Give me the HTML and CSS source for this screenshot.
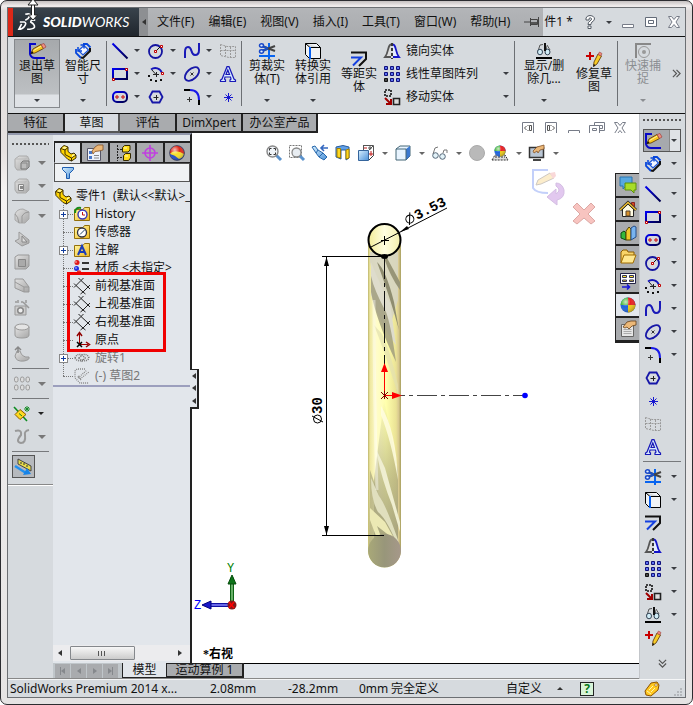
FILE: index.html
```html
<!DOCTYPE html>
<html lang="zh-CN">
<head>
<meta charset="utf-8">
<meta name="viewport" content="width=device-width, initial-scale=1">
<title>SolidWorks Premium 2014</title>
<link rel="stylesheet" href="styles.css">
</head>
<body>
<svg class="sprite" aria-hidden="true">
  <defs>
    <linearGradient id="g-blue" x1="0" y1="0" x2="1" y2="1"><stop offset="0" stop-color="#0000f0"/><stop offset="1" stop-color="#00004a"/></linearGradient>
    <linearGradient id="g-grey" x1="0" y1="0" x2="1" y2="1"><stop offset="0" stop-color="#e2e2e2"/><stop offset="1" stop-color="#a6a6a6"/></linearGradient>
    <linearGradient id="g-cyan" x1="0" y1="0" x2="1" y2="1"><stop offset="0" stop-color="#d8f0ff"/><stop offset="1" stop-color="#4a90d8"/></linearGradient>
    <linearGradient id="g-gold" x1="0" y1="0" x2="1" y2="1"><stop offset="0" stop-color="#fff9a8"/><stop offset="1" stop-color="#f0b820"/></linearGradient>
    <radialGradient id="g-shine" cx=".35" cy=".3" r=".8"><stop offset="0" stop-color="#fff" stop-opacity=".7"/><stop offset=".4" stop-color="#fff" stop-opacity="0"/><stop offset="1" stop-color="#000" stop-opacity=".35"/></radialGradient>
  </defs>
  <symbol id="sketch" viewBox="0 0 16 16"><path d="M7 1H1V11Q2 15 6 15H16" fill="none" stroke="#0808c8" stroke-width="2"/><path d="M2 10.500L4 6L12 1.500L14.500 5.500L6 10Z" fill="#f8c820" stroke="#553000" stroke-width=".8"/><path d="M4.500 7.500L12.500 3" stroke="#fff2a0"/><path d="M12 1.500L15 .500L17 4L14.500 5.500Z" fill="#f09080" stroke="#944" stroke-width=".7"/><path d="M1.500 11L3 8l1.500 2z" fill="#111"/></symbol>
  <symbol id="dim" viewBox="0 0 16 16"><path d="M8 1H12L15.500 4.500M1 6V10L6 15" fill="none" stroke="#0646dc" stroke-width="1.800"/><path d="M3.500 7.500L9 2.500L13.500 7L8 12Z" fill="#f4f7ff" stroke="#1c55d8" stroke-width="1.200"/><path d="M3 4V8H7M5.500 2H9V5.500" fill="none" stroke="#0646dc" stroke-width="1.500"/><path d="M6 14.500L8 15L15 8V5" fill="none" stroke="#111" stroke-width="2"/></symbol>
  <symbol id="line" viewBox="0 0 16 16"><path d="M.500 .500L15.500 15.500" stroke="url(#g-blue)" stroke-width="2"/></symbol>
  <symbol id="rect" viewBox="0 0 16 16"><rect x="1" y="3" width="14" height="10" fill="none" stroke="url(#g-blue)" stroke-width="2"/><path d="M13.500 2.500h2v2h-2zM.500 12.500h2v2h-2z" fill="#fff" stroke="#c00000"/></symbol>
  <symbol id="slot" viewBox="0 0 16 16"><rect x="1" y="3" width="14" height="10" rx="4" fill="none" stroke="url(#g-blue)" stroke-width="2"/><path d="M4 7h2v2H4zM10 7h2v2h-2z" fill="#fff" stroke="#c00000"/></symbol>
  <symbol id="circle" viewBox="0 0 16 16"><circle cx="7.500" cy="8.500" r="6.500" fill="none" stroke="#1414a0" stroke-width="1.800"/><path d="M8 8L13 3" stroke="#111"/><path d="M6.500 7.500h2v2h-2zM12.500 2.500h2v2h-2z" fill="#fff" stroke="#c00000"/></symbol>
  <symbol id="arc" viewBox="0 0 16 16"><path d="M3 3.500A7 7 0 0 1 14 7" fill="none" stroke="#1414b8" stroke-width="1.800"/><path d="M4 4L8 8.500M5 8.500h6M8.500 6v5" stroke="#222"/><path d="M13.500 6.500h2v2h-2z" fill="#fff" stroke="#c00000"/><path d="M0 9h2v2H0zM2 13h2v2H2zM7 14h2v2H7zM12 13h2v2h-2z" fill="#111"/></symbol>
  <symbol id="spline" viewBox="0 0 16 16"><path d="M1 15V9Q1 4 4 4Q6.500 4 7.500 8Q8.500 12 11 12Q15 12 15 7V0" fill="none" stroke="#1a1ab8" stroke-width="2"/></symbol>
  <symbol id="ellipse" viewBox="0 0 16 16"><ellipse cx="8" cy="8" rx="8.500" ry="5" transform="rotate(-42 8 8)" fill="none" stroke="#1818a8" stroke-width="1.800"/><path d="M6.500 6.500l3 3M9.500 6.500l-3 3" stroke="#333"/></symbol>
  <symbol id="fillet" viewBox="0 0 16 16"><path d="M0 1H6" stroke="#000" stroke-width="2"/><path d="M6 1Q15 1 15 11" fill="none" stroke="#1818e8" stroke-width="2"/><path d="M15 11V16" stroke="#000" stroke-width="2"/><path d="M3 10.500h5M5.500 8v5" stroke="#333"/></symbol>
  <symbol id="hex" viewBox="0 0 16 16"><path d="M4.500 2.500H11.500L14.500 8L11.500 13.500H4.500L1.500 8Z" fill="none" stroke="#1616a8" stroke-width="1.800"/><path d="M5.500 8.500h5M8.500 6v5" stroke="#222"/></symbol>
  <symbol id="star" viewBox="0 0 16 16"><path d="M8.500 4v9M4 8.500h9M5.500 5.500l6 6M11.500 5.500l-6 6" stroke="#1616d0"/></symbol>
  <symbol id="plane" viewBox="0 0 16 16"><path d="M.500 1.500L7 3.500H15.500V14.500H9L.500 12.500ZM.500 7.500H15.500M5.500 3v10M10.500 4v10" fill="none" stroke="#999" stroke-dasharray="2 1"/></symbol>
  <symbol id="lettera" viewBox="0 0 16 16"><path d="M.500 15.500V14L2 13L7 .700H9L14 13L15.500 14V15.500H10V14L11 13L10.500 11H5L4.500 13L5.500 14V15.500ZM6 8.500H9.500L7.800 4Z" fill="#d7eaff" stroke="#1818b8" stroke-width="1.200"/></symbol>
  <symbol id="trim" viewBox="0 0 16 16"><path d="M0 13H16M10 0V16" stroke="#0864f0" stroke-width="2"/><path d="M3 3L16 8M3 8L16 3" stroke="#444" stroke-width="2"/><path d="M3 3L9 5.500M3 8L9 5.500" stroke="#1c50c0" stroke-width="2"/><ellipse cx="2.500" cy="2.500" rx="2" ry="1.700" fill="#e4f0ff" stroke="#1848c8" stroke-width="1.500"/><ellipse cx="2.500" cy="8.500" rx="2" ry="1.700" fill="#e4f0ff" stroke="#1848c8" stroke-width="1.500"/></symbol>
  <symbol id="convert" viewBox="0 0 16 16"><path d="M.500 .500H11.500L15.500 4.500V15.500H4.500L.500 11.500ZM.500 .500L5 4.500H15.500" fill="#f1f3f5" stroke="#000"/><path d="M5 4V16" stroke="#0860f0" stroke-width="2"/></symbol>
  <symbol id="offset" viewBox="0 0 16 16"><path d="M0 1.500H15V8L8 15" fill="none" stroke="#111" stroke-width="2"/><path d="M0 6.500H10L2 14.500" fill="none" stroke="#1440e0" stroke-width="2"/></symbol>
  <symbol id="mirror" viewBox="0 0 16 16"><path d="M7 1.500C3.500 2 5 9 1 14H7" fill="#ddd" stroke="#555" stroke-width="1.800"/><path d="M9 1.500C12.500 2 11 9 15 14H9" fill="#e4ecff" stroke="#1414c8" stroke-width="1.800"/><path d="M8 0V16" stroke="#000" stroke-width="1.500" stroke-dasharray="3 2"/></symbol>
  <symbol id="pattern" viewBox="0 0 16 16"><g fill="#5c72f0" stroke="#10107c"><path d="M.500 .500h3v3h-3zM6.500 .500h3v3h-3zM12.500 .500h3v3h-3zM.500 6.500h3v3h-3zM6.500 6.500h3v3h-3zM12.500 6.500h3v3h-3zM6.500 12.500h3v3h-3zM12.500 12.500h3v3h-3z"/><path d="M.500 12.500h3v3h-3z" fill="#444" stroke="#111"/></g></symbol>
  <symbol id="move" viewBox="0 0 16 16"><path d="M1 1H7V7H1Z" fill="none" stroke="#111" stroke-width="1.600" stroke-dasharray="2 1"/><path d="M9.500 9.500h6v6h-6z" fill="#dcdcdc" stroke="#222" stroke-width="1.600"/><path d="M1 9L6 14M7 10V15H2" stroke="#a00000" stroke-width="2" fill="none"/></symbol>
  <symbol id="glasses" viewBox="0 0 16 16"><path d="M2 8L4 2L7 1.500M11 9L10 3M11 2L14 7" fill="none" stroke="#555"/><ellipse cx="4" cy="9" rx="2.500" ry="2.800" fill="#d0ecf6" stroke="#345"/><ellipse cx="11.500" cy="9" rx="2.500" ry="2.800" fill="#d0ecf6" stroke="#345"/><path d="M9 0v8" stroke="#111" stroke-width="2"/><path d="M0 15H16" stroke="#000" stroke-width="2"/></symbol>
  <symbol id="repair" viewBox="0 0 16 16"><path d="M0 5H8M4 1V9" stroke="#c80000" stroke-width="2"/><path d="M7.500 15.500L8 11L12 3L15.500 5L11 13Z" fill="#f8cc28" stroke="#553000" stroke-width=".8"/><path d="M12 3.500L13.500 1L16 2.500L15 5Z" fill="#ee8878" stroke="#944" stroke-width=".6"/><path d="M7.500 16V13l2 1z" fill="#111"/></symbol>
  <symbol id="snap" viewBox="0 0 16 16"><path d="M1 15V1H16" fill="none" stroke="#888" stroke-width="2"/><circle cx="9" cy="9" r="5.500" fill="none" stroke="#999"/><circle cx="9" cy="9" r="2" fill="#999"/></symbol>
  <symbol id="part" viewBox="0 0 16 16"><path d="M.500 3.500L4 .500L8 2V6.500L11 9L14 8L16 10V13L11.500 16L8 14.500L1 7.500Z" fill="#ffd400" stroke="#3c2c00"/><path d="M1 3.500L5 5L8 2.500M5 5V9.500L11.500 13L16 10M11.500 13V16" fill="none" stroke="#3c2c00"/><path d="M2 3.300L4.500 1.500L7 2.300L5 4ZM12 10L14 9L15 10L12 12Z" fill="#fff6a0"/></symbol>
  <symbol id="props" viewBox="0 0 16 16"><path d="M.500 3.500H13.500V15.500H.500Z" fill="#eef2fa" stroke="#556"/><path d="M2 6h3v3H2zM2 11h3v3H2z" fill="#4a78c8"/><path d="M7 10.500h5M7 13h5" stroke="#888"/><path d="M5 6L8 2L11 0H16V5L12 6L8 6.500L6 9Z" fill="#ecb878" stroke="#84542a" stroke-width=".8"/></symbol>
  <symbol id="sheet" viewBox="0 0 16 16"><path d="M1.500 3.500H13.500V15.500H1.500Z" fill="#e6e6e6" stroke="#666"/><path d="M3.500 8.500h8M3.500 10.500h8M3.500 12.500h8" stroke="#aaa"/><path d="M3 6L7 1L11 0H16V4L12 5L9 8L7 6L5 7Z" fill="#ecb878" stroke="#64401c" stroke-width=".8"/></symbol>
  <symbol id="config" viewBox="0 0 16 16"><path d="M2.500 0V16M2 4.500H7M2 12.500H7" stroke="#222" stroke-dasharray="2 1"/><path d="M7.500 2.500l2-2h5.500v4.500l-2 2H7.500zM8.500 10.500l2-2h5v4.500l-2 2.500h-5z" fill="#ffdc18" stroke="#332800"/><path d="M9 3h3M10 11h3" stroke="#fffbc0"/></symbol>
  <symbol id="target" viewBox="0 0 16 16"><circle cx="8" cy="8" r="5" fill="none" stroke="#c040e0" stroke-width="1.600"/><path d="M8 0V16M0 8H16" stroke="#c040e0" stroke-width="1.600"/></symbol>
  <symbol id="ball" viewBox="0 0 16 16"><circle cx="8" cy="8" r="7.500" fill="#1c62dc"/><path d="M8 8V.500A7.500 7.500 0 0 0 .500 8Z" fill="#4cb83c"/><path d="M8 8V.500A7.500 7.500 0 0 1 15.500 8Z" fill="#e82020"/><path d="M8 8H15.500A7.500 7.500 0 0 1 8 15.500Z" fill="#ecc814"/><circle cx="8" cy="8" r="7.500" fill="url(#g-shine)"/></symbol>
  <symbol id="ball2" viewBox="0 0 16 16"><circle cx="8" cy="8" r="7.500" fill="#2048c8"/><path d="M4 2Q8 -1 13 3Q16 7 15 9L8 7Q4 6 1 9Q0 5 4 2Z" fill="#e02818"/><path d="M3 7Q9 5 15 9Q14 13 10 14Q6 10 1 9Z" fill="#f8dc28"/><circle cx="8" cy="8" r="7.500" fill="url(#g-shine)" stroke="#333" stroke-width=".5"/></symbol>
  <symbol id="folder" viewBox="0 0 16 16"><path d="M.500 3.500H9L10.500 1.500H15.500V14.500H.500Z" fill="url(#g-gold)" stroke="#94700c"/></symbol>
  <symbol id="history" viewBox="0 0 16 16"><use href="#folder"/><circle cx="8.500" cy="8.500" r="4.500" fill="#fff" stroke="#3838b8" stroke-width="1.400"/><path d="M8.500 6V9H11" fill="none" stroke="#c01010"/><path d="M1 7Q1 1 7 2" fill="none" stroke="#188c18" stroke-width="2"/></symbol>
  <symbol id="sensor" viewBox="0 0 16 16"><use href="#folder"/><circle cx="8" cy="8.500" r="4.500" fill="#fff" stroke="#334" stroke-width="1.300"/><path d="M6 10.500L10.500 6" stroke="#246"/></symbol>
  <symbol id="note" viewBox="0 0 16 16"><use href="#folder"/><path d="M4 13L8 4L12 13M5.500 10H10.500" fill="none" stroke="#1c3cb8" stroke-width="2"/></symbol>
  <symbol id="material" viewBox="0 0 16 16"><circle cx="3" cy="2.500" r="2.500" fill="#e01818"/><circle cx="2.500" cy="8.500" r="2.500" fill="#2030e0"/><circle cx="5" cy="12.500" r="2.300" fill="#e03030"/><circle cx="2" cy="2" r=".7" fill="#fff"/><circle cx="2" cy="8" r=".7" fill="#fff"/><path d="M8 3H15M8 9H15" stroke="#333" stroke-width="2"/></symbol>
  <symbol id="datum" viewBox="0 0 16 16"><path d="M2 7.500L7 2.500L14 9L9 14ZM4.500 0L7 2.500L9.500 0M14 9L16 7M14 9L16 11M2 7.500L0 5.500M2 7.500L0 9.500M9 14L6.500 16M9 14L11.500 16" fill="none" stroke="#222"/></symbol>
  <symbol id="origin" viewBox="0 0 16 16"><path d="M5.500 12V2M6 12.500H14" stroke="#a00000"/><path d="M3 4l2.500-3.500L8 4M12 10l3.500 2.500L12 15" fill="none" stroke="#900000" stroke-width="1.500"/><path d="M3 10l5 5M8 10l-5 5" stroke="#000" stroke-width="1.500"/></symbol>
  <symbol id="revolve" viewBox="0 0 16 16"><path d="M1 8Q3 3 8 5Q13 3 15 8Q13 12 8 10Q3 12 1 8ZM5 8L8 5L11 8L8 11Z" fill="none" stroke="#777" stroke-width="1.600" stroke-dasharray="1 1"/></symbol>
  <symbol id="sketchoff" viewBox="0 0 16 16"><path d="M11 1H3L1 3V10L6 15H15M4 10L13 2M6 11L15 4M4 8L7 12" fill="none" stroke="#888" stroke-width="1.300" stroke-dasharray="1 1"/></symbol>
  <symbol id="cube" viewBox="0 0 16 16"><path d="M1 4L5 1H13L15 4V12L12 15H3L1 12Z" fill="url(#g-grey)" stroke="#aaa"/><path d="M1 4H11L15 2M11 4V15" fill="none" stroke="#bbb"/></symbol>
  <symbol id="boss" viewBox="0 0 16 16"><use href="#cube"/><path d="M7 8L9 6H15V12L13 14H7Z" fill="#bbb" stroke="#777"/><path d="M7 8H13V14" fill="none" stroke="#888"/></symbol>
  <symbol id="cut" viewBox="0 0 16 16"><use href="#cube"/><path d="M4.500 6.500H9.500V12.500H4.500Z" fill="#eee" stroke="#888"/><path d="M6 8h3v3H6z" fill="#888"/></symbol>
  <symbol id="round" viewBox="0 0 16 16"><path d="M1 12V6Q3 1 9 1L15 4V11L11 15L5 15Z" fill="url(#g-grey)" stroke="#aaa"/><path d="M1 6Q4 8 5 15M8 8Q10 4 15 4M8 8V15" fill="none" stroke="#999"/></symbol>
  <symbol id="rib" viewBox="0 0 16 16"><path d="M5 1V8L1 10L8 15L15 12V9Z" fill="url(#g-grey)" stroke="#999"/><path d="M8 5V11H13Z" fill="#ddd" stroke="#888"/></symbol>
  <symbol id="shell" viewBox="0 0 16 16"><path d="M1 3L4 1H15V12L12 15H1Z" fill="url(#g-grey)" stroke="#999"/><path d="M4.500 5.500H11.500V12.500H4.500Z" fill="#aaa" stroke="#888"/></symbol>
  <symbol id="draft" viewBox="0 0 16 16"><path d="M1 2H9L15 10V15H10L1 11Z" fill="url(#g-grey)" stroke="#999"/><path d="M1 5L10 10H15M10 10V15" fill="none" stroke="#999"/></symbol>
  <symbol id="wiz" viewBox="0 0 16 16"><path d="M1 6H12V15H1Z" fill="#ccc" stroke="#999"/><circle cx="6.500" cy="10.500" r="2.800" fill="#eee" stroke="#888" stroke-width="1.500"/><path d="M9 2L15 8M1 2h2M4 0v3M7 2h2M12 0v3" stroke="#999" stroke-width="1.500"/></symbol>
  <symbol id="cyl" viewBox="0 0 16 16"><path d="M1 4V12Q1 15 8 15Q15 15 15 12V4Z" fill="url(#g-grey)" stroke="#999"/><ellipse cx="8" cy="4" rx="7" ry="3" fill="#e4e4e4" stroke="#999"/></symbol>
  <symbol id="dome" viewBox="0 0 16 16"><path d="M1 10Q2 16 10 15Q16 14 15 11Q8 12 6 5H3Z" fill="url(#g-grey)" stroke="#999"/><path d="M1 4L4 1L7 4M4 1V7" fill="none" stroke="#888" stroke-width="1.500"/></symbol>
  <symbol id="lpat" viewBox="0 0 16 16"><g fill="#ddd" stroke="#999"><rect x=".5" y="1" width="3.500" height="5" rx="1.700"/><rect x="6.500" y="1" width="3.500" height="5" rx="1.700"/><rect x="12" y="1" width="3.500" height="5" rx="1.700"/><rect x=".5" y="9" width="3.500" height="5" rx="1.700"/><rect x="6.500" y="9" width="3.500" height="5" rx="1.700"/><rect x="12" y="9" width="3.500" height="5" rx="1.700"/></g></symbol>
  <symbol id="refgeo" viewBox="0 0 16 16"><path d="M0 1L13 15" stroke="#0c8c20" stroke-width="1.600"/><path d="M1 8.500L6 3.500L12 8.500L6 13.500Z" fill="#ffd820" stroke="#8a5c00"/><path d="M5 7.500L8 10" stroke="#0c8c20"/><path d="M13 0V6M10 3H16M11 1L15 5M15 1L11 5" stroke="#188c28"/></symbol>
  <symbol id="curve" viewBox="0 0 16 16"><path d="M1 2Q8 0 7 6Q1 13 7 14Q12 14 11 6Q10 2 15 1" fill="none" stroke="#999" stroke-width="2"/></symbol>
  <symbol id="instant" viewBox="0 0 16 16"><path d="M3 0V5L16 12V7Z" fill="#e8dc48" stroke="#444"/><path d="M6 3v2M9 4v2M12 6v2" stroke="#333"/><path d="M0 7L11 14" stroke="#2090f0" stroke-width="2.500"/><path d="M8 16L16 15L12 9Z" fill="#1884e8"/></symbol>
  <symbol id="zoomfit" viewBox="0 0 16 16"><path d="M10 10L15 15" stroke="#5b92cc" stroke-width="3"/><circle cx="6.500" cy="6.500" r="5.500" fill="#f0f4f8" stroke="#888" stroke-width="1.400"/><path d="M3.500 5.500v-2h2M7.500 3.500h2v2M9.500 7.500v2h-2M5.500 9.500h-2v-2" fill="none" stroke="#333"/></symbol>
  <symbol id="zoomarea" viewBox="0 0 16 16"><path d="M.500 .500H12.500V12.500H.500Z" fill="none" stroke="#777" stroke-dasharray="2 1"/><path d="M10 10L15 15" stroke="#5b92cc" stroke-width="3"/><circle cx="7.500" cy="7.500" r="4.500" fill="#e8edf2" stroke="#888" stroke-width="1.300"/></symbol>
  <symbol id="prev" viewBox="0 0 16 16"><path d="M0 2L3 1L6 5L11 8L15 12L12 15L7 12L4 8Z" fill="url(#g-cyan)" stroke="#2868ac"/><path d="M6 5L4 8M11 8L7 12" stroke="#2868ac"/><path d="M9 3H16M12 0L9 3L12 6" fill="none" stroke="#3468c0" stroke-width="1.600"/></symbol>
  <symbol id="section" viewBox="0 0 16 16"><path d="M1 2L8 .500L14 2V13L11 15V5H6V14L1 12Z" fill="#60a0e8" stroke="#285c9c"/><path d="M2 3.500H5.500V13L2 12ZM11 5L14 4V13L11 14Z" fill="#ffd820" stroke="#a48000"/></symbol>
  <symbol id="orient" viewBox="0 0 16 16"><path d="M5 .500H15.500V11M5.500 1V5M15 1L11 5M10 3h4M12 1v4" fill="none" stroke="#555"/><path d="M.500 5.500H10.500V15.500H.500Z" fill="url(#g-cyan)" stroke="#35659c"/><path d="M11 9h4M13 6v5M6 3h3" stroke="#c01818"/><path d="M11 15L15 11" stroke="#333"/></symbol>
  <symbol id="display" viewBox="0 0 16 16"><path d="M1 4L5 1H15V11L11 15H1Z" fill="#e8f4ff" stroke="#467"/><path d="M11 4L15 1V11L11 15Z" fill="#3a78d0"/><path d="M1 4H11V15" fill="none" stroke="#467"/></symbol>
  <symbol id="specs" viewBox="0 0 16 16"><path d="M1 9L3 3L6 2M11 8L12 5L15 5V8" fill="none" stroke="#777"/><circle cx="3.500" cy="10.500" r="2.800" fill="#e2f2f8" stroke="#567"/><circle cx="10.500" cy="11.500" r="2.800" fill="#e2f2f8" stroke="#567"/></symbol>
  <symbol id="greyball" viewBox="0 0 16 16"><circle cx="8" cy="8" r="7.500" fill="#b9b9b9" stroke="#aaa"/></symbol>
  <symbol id="scene" viewBox="0 0 16 16"><path d="M0 15L3 10H13L16 15ZM3 12H13" fill="#ddd" stroke="#333" stroke-dasharray="2 1"/><svg x="2" y="0" width="12" height="12"><use href="#ball" width="12" height="12"/></svg></symbol>
  <symbol id="viewset" viewBox="0 0 16 16"><path d="M.500 2.500H14.500V12.500H.500Z" fill="#bac6d4" stroke="#333" stroke-width="1.500"/><path d="M4 15H12" stroke="#444" stroke-width="2"/><path d="M4 6L8 2L15 0V4L11 5L9 8L8 6L5 8Z" fill="#ecb878" stroke="#84542a" stroke-width=".8"/></symbol>
  <symbol id="forum" viewBox="0 0 16 16"><path d="M0 0H12V9H6L3 12V9H0Z" fill="#58a8e0" stroke="#2874b0"/><path d="M5 6H16V13H14V16L11 13H5Z" fill="#a8dc28" stroke="#5c9008"/></symbol>
  <symbol id="home" viewBox="0 0 16 16"><path d="M11.500 1.500h3v4h-3z" fill="#d84820" stroke="#822"/><path d="M2.500 8V15.500H13.500V8L8 3Z" fill="#fffbe2" stroke="#222"/><path d="M0 9L8 1.500L16 9" fill="none" stroke="#222" stroke-width="3"/><path d="M0 9L8 1.500L16 9" fill="none" stroke="#f0c030" stroke-width="1.500"/><path d="M6 10h4v5H6z" fill="#d89028" stroke="#543"/></symbol>
  <symbol id="lib" viewBox="0 0 16 16"><path d="M1 8l3-2 2 2v7l-5-2z" fill="#34b83c" stroke="#084c10"/><path d="M6 6l3-4 2 2v11H6z" fill="#f0c828" stroke="#554400"/><path d="M11 3l3-2 2 1v10l-5 3z" fill="#78b4f0" stroke="#244c88"/></symbol>
  <symbol id="open" viewBox="0 0 16 16"><path d="M1 14V3L3 1H7L8 3H14V6" fill="#f8d468" stroke="#8c5c00"/><path d="M1 14L4 6H16L13 14Z" fill="#ffe890" stroke="#a06c00"/></symbol>
  <symbol id="palette" viewBox="0 0 16 16"><path d="M.500 .500H15.500V10.500H.500Z" fill="#fff" stroke="#224"/><path d="M2.500 2.500h4v2h-4zM9.500 2.500h4v2h-4zM2.500 7h4v1.500h-4zM9.500 7h4v1.500h-4z" fill="#ffe430" stroke="#335"/><path d="M2 14H9M7 11.500L9.500 14L7 16.500" fill="none" stroke="#1818d8" stroke-width="1.600"/></symbol>
  <symbol id="dblright" viewBox="0 0 10 10"><path d="M1 1L5 5L1 9M5 1L9 5L5 9" fill="none" stroke="#555" stroke-width="1.300"/></symbol>
  <symbol id="min" viewBox="0 0 14 14"><path d="M1.500 9.500H12.500V12.500H1.500Z" fill="#fff" stroke="#777c88"/></symbol>
  <symbol id="max" viewBox="0 0 14 14"><path d="M1.500 2.500H12.500V11.500H1.500Z M4.500 5.500H9.500V8.500H4.500Z" fill="#fff" stroke="#636b78"/></symbol>
  <symbol id="restore" viewBox="0 0 14 14"><path d="M4.500 1.500H14.500V9.500H4.500ZM7.500 4.500H12.500V7.500H7.500Z" fill="#fff" stroke="#777c88"/><path d="M-.500 4.500H9.500V12.500H-.500ZM2.500 7.500H6.500V9.500H2.500Z" fill="#fff" stroke="#777c88"/></symbol>
  <symbol id="close" viewBox="0 0 14 14"><path d="M1.500 1.500H4.500L7 4.500L9.500 1.500H12.500L9 7L12.500 12.500H9.500L7 9.500L4.500 12.500H1.500L5 7Z" fill="#fff" stroke="#777c88"/></symbol>
  <symbol id="tileleft" viewBox="0 0 14 14"><path d="M1.500 1.500H12.500V12.500H1.500Z" fill="#fff" stroke="#777c88"/><path d="M5.500 5L3.500 7L5.500 9M6.500 4.500h1M6.500 9.500h1M8.500 4.500h2v5h-2z" fill="none" stroke="#555"/></symbol>
  <symbol id="tileright" viewBox="0 0 14 14"><path d="M1.500 1.500H12.500V12.500H1.500Z" fill="#fff" stroke="#777c88"/><path d="M8.500 5L10.500 7L8.500 9M6.500 4.500h1M6.500 9.500h1M3.500 4.500h2v5h-2z" fill="none" stroke="#555"/></symbol>
</svg>

<div class="window">
  <svg class="cursor" viewBox="0 0 12 24" aria-hidden="true"><path d="M4.500 -2V14H1.500L6 19L10.500 14H7.500V-2Z" fill="#fff" stroke="#222"/><path d="M1 4L6 -2L11 4Z" fill="#fff" stroke="#222"/></svg>
  <div class="app">
    <header class="titlebar">
      <div class="brand">
        <svg class="ds" viewBox="0 0 22 20" aria-hidden="true"><path d="M8 1.500Q14 0 13 3Q12 6 8 8M2 10H7Q10 11 7 15Q5 18 1 18L4 12M19 8Q14 7 14 10Q19 13 18 16Q16 18 10 18" fill="none" stroke="#fff" stroke-width="1.800"/></svg>
        <span class="brand-name"><b>SOLID</b>WORKS</span>
      </div>
      <button class="collapse" type="button" aria-label="收起菜单"><i class="tri left"></i></button>
      <nav class="menu">
        <a href="#">文件(F)</a><a href="#">编辑(E)</a><a href="#">视图(V)</a><a href="#">插入(I)</a><a href="#">工具(T)</a><a href="#">窗口(W)</a><a href="#">帮助(H)</a>
        <button type="button" class="pin" aria-label="固定"><svg viewBox="0 0 16 10"><path d="M0 5H6M6.500 1V9M6.500 2.500H13.500V7.500H6.500M14.500 0V10" fill="none" stroke="#444"/><path d="M7 5h6v2H7z" fill="#555"/></svg></button>
      </nav>
      <div class="doc">件1 *</div>
      <div class="winbtns">
        <button type="button" aria-label="帮助"><svg viewBox="0 0 14 14"><path d="M3 5V3Q4 .500 7 .500Q11.500 1 11.500 4Q11 6 9 7Q8 8 8 9.500H5Q5 7 7 6Q9 5 8.500 3.500Q7 2 6 3.500V5ZM5 11h3v2.500H5Z" fill="#fff" stroke="#555c66"/></svg></button>
        <i class="tri"></i>
        <button type="button" aria-label="最小化"><svg><use href="#min"/></svg></button>
        <button type="button" aria-label="最大化"><svg><use href="#max"/></svg></button>
        <button type="button" aria-label="关闭"><svg><use href="#close"/></svg></button>
      </div>
    </header>

    <section class="ribbon" aria-label="草图工具">
      <button type="button" class="big pressed"><svg class="ic"><use href="#sketch"/></svg><span>退出草图</span><i class="tri"></i></button>
      <button type="button" class="big"><svg class="ic"><use href="#dim"/></svg><span>智能尺寸</span><i class="tri"></i></button>
      <div class="vsep"></div>
      <div class="grid">
        <button type="button" aria-label="直线"><svg class="ic"><use href="#line"/></svg><i class="tri"></i></button>
        <button type="button" aria-label="圆"><svg class="ic"><use href="#circle"/></svg><i class="tri"></i></button>
        <button type="button" aria-label="样条曲线"><svg class="ic"><use href="#spline"/></svg><i class="tri"></i></button>
        <button type="button" aria-label="基准面"><svg class="ic"><use href="#plane"/></svg></button>
        <button type="button" aria-label="矩形"><svg class="ic"><use href="#rect"/></svg><i class="tri"></i></button>
        <button type="button" aria-label="圆弧"><svg class="ic"><use href="#arc"/></svg><i class="tri"></i></button>
        <button type="button" aria-label="椭圆"><svg class="ic"><use href="#ellipse"/></svg><i class="tri"></i></button>
        <button type="button" aria-label="文字"><svg class="ic"><use href="#lettera"/></svg></button>
        <button type="button" aria-label="槽口"><svg class="ic"><use href="#slot"/></svg><i class="tri"></i></button>
        <button type="button" aria-label="多边形"><svg class="ic"><use href="#hex"/></svg></button>
        <button type="button" aria-label="圆角"><svg class="ic"><use href="#fillet"/></svg><i class="tri"></i></button>
        <button type="button" aria-label="点"><svg class="ic"><use href="#star"/></svg></button>
      </div>
      <div class="vsep"></div>
      <button type="button" class="big"><svg class="ic"><use href="#trim"/></svg><span>剪裁实体(T)</span><i class="tri"></i></button>
      <button type="button" class="big"><svg class="ic"><use href="#convert"/></svg><span>转换实体引用</span><i class="tri"></i></button>
      <button type="button" class="big plain"><svg class="ic"><use href="#offset"/></svg><span>等距实体</span></button>
      <div class="list">
        <button type="button"><svg class="ic"><use href="#mirror"/></svg><span>镜向实体</span></button>
        <button type="button"><svg class="ic"><use href="#pattern"/></svg><span>线性草图阵列</span><i class="tri"></i></button>
        <button type="button"><svg class="ic"><use href="#move"/></svg><span>移动实体</span><i class="tri"></i></button>
      </div>
      <div class="vsep"></div>
      <button type="button" class="big wide"><svg class="ic"><use href="#glasses"/></svg><span>显示/删除几...</span><i class="tri"></i></button>
      <button type="button" class="big plain"><svg class="ic"><use href="#repair"/></svg><span>修复草图</span></button>
      <div class="vsep"></div>
      <button type="button" class="big" disabled><svg class="ic"><use href="#snap"/></svg><span>快速捕捉</span><i class="tri"></i></button>
      <button type="button" class="more" aria-label="更多"><svg><use href="#dblright"/></svg></button>
    </section>

    <main class="main">
      <div class="work">
        <div class="tabrow">
          <nav class="tabs">
            <a href="#">特征</a><a href="#" class="on">草图</a><a href="#">评估</a><a href="#" class="mid">DimXpert</a><a href="#" class="long">办公室产品</a>
          </nav>
          <div class="docbtns">
            <button type="button" aria-label="左侧平铺"><svg><use href="#tileleft"/></svg></button>
            <button type="button" aria-label="右侧平铺"><svg><use href="#tileright"/></svg></button>
            <button type="button" aria-label="最小化文档"><svg><use href="#min"/></svg></button>
            <button type="button" aria-label="还原文档"><svg><use href="#restore"/></svg></button>
            <button type="button" aria-label="关闭文档"><svg><use href="#close"/></svg></button>
          </div>
        </div>

        <div class="body">
          <aside class="tools features" aria-label="特征工具">
            <div class="grip"></div>
            <button type="button" aria-label="拉伸凸台"><svg class="ic"><use href="#boss"/></svg><i class="tri"></i></button>
            <button type="button" aria-label="拉伸切除"><svg class="ic"><use href="#cut"/></svg><i class="tri"></i></button>
            <hr>
            <button type="button" aria-label="圆角特征"><svg class="ic"><use href="#round"/></svg><i class="tri"></i></button>
            <button type="button" aria-label="筋"><svg class="ic"><use href="#rib"/></svg></button>
            <button type="button" aria-label="抽壳"><svg class="ic"><use href="#shell"/></svg></button>
            <button type="button" aria-label="拔模"><svg class="ic"><use href="#draft"/></svg></button>
            <button type="button" aria-label="异型孔向导"><svg class="ic"><use href="#wiz"/></svg></button>
            <button type="button" aria-label="圆顶"><svg class="ic"><use href="#cyl"/></svg></button>
            <button type="button" aria-label="弯曲"><svg class="ic"><use href="#dome"/></svg></button>
            <hr>
            <button type="button" aria-label="线性阵列"><svg class="ic"><use href="#lpat"/></svg><i class="tri"></i></button>
            <hr>
            <button type="button" aria-label="参考几何体"><svg class="ic"><use href="#refgeo"/></svg><i class="tri dark"></i></button>
            <button type="button" aria-label="曲线"><svg class="ic"><use href="#curve"/></svg><i class="tri"></i></button>
            <hr>
            <button type="button" class="instant" aria-label="Instant3D"><svg class="ic"><use href="#instant"/></svg></button>
            <div class="endline"></div>
          </aside>

          <section class="tree">
            <div class="treetabs">
              <button type="button" class="on" aria-label="设计树"><svg class="ic"><use href="#part"/></svg></button>
              <button type="button" aria-label="属性"><svg class="ic"><use href="#props"/></svg></button>
              <button type="button" aria-label="配置"><svg class="ic"><use href="#config"/></svg></button>
              <button type="button" aria-label="尺寸专家"><svg class="ic"><use href="#target"/></svg></button>
              <button type="button" aria-label="外观"><svg class="ic"><use href="#ball2"/></svg></button>
            </div>
            <label class="filter"><svg viewBox="0 0 12 12" aria-hidden="true"><path d="M.500 .500H11.500V2.500L7.500 6.500V11.500H4.500V6.500L.500 2.500Z" fill="url(#g-cyan)" stroke="#1c5cb0"/></svg><input type="text" aria-label="过滤"></label>
            <div class="root"><svg class="ic"><use href="#part"/></svg><span>零件1&nbsp; (默认&lt;&lt;默认&gt;_</span></div>
            <ul class="nodes">
              <li><i class="plus"></i><svg class="ic"><use href="#history"/></svg><span>History</span></li>
              <li><svg class="ic"><use href="#sensor"/></svg><span>传感器</span></li>
              <li><i class="plus"></i><svg class="ic"><use href="#note"/></svg><span>注解</span></li>
              <li><svg class="ic"><use href="#material"/></svg><span>材质 &lt;未指定&gt;</span></li>
              <li class="marked-start"><svg class="ic"><use href="#datum"/></svg><span>前视基准面</span></li>
              <li><svg class="ic"><use href="#datum"/></svg><span>上视基准面</span></li>
              <li><svg class="ic"><use href="#datum"/></svg><span>右视基准面</span></li>
              <li><svg class="ic"><use href="#origin"/></svg><span>原点</span></li>
              <li class="off"><i class="plus"></i><svg class="ic"><use href="#revolve"/></svg><span>旋转1</span></li>
              <li class="off"><svg class="ic"><use href="#sketchoff"/></svg><span>(-) 草图2</span></li>
            </ul>
            <div class="rollback"></div>
            <div class="hscroll"><button type="button" aria-label="向左滚动"><i class="tri left"></i></button><div class="thumb"></div><button type="button" class="end" aria-label="向右滚动"><i class="tri right"></i></button></div>
            <button type="button" class="splitter" aria-label="折叠面板"><i class="tri left"></i><i class="tri left"></i><i class="tri left"></i></button>
          </section>

          <section class="viewport">
            <svg class="model" viewBox="192 133 447 530" preserveAspectRatio="xMinYMin meet" role="img" aria-label="零件模型">
              <defs>
                <linearGradient id="rod" x1="0" y1="0" x2="1" y2="0"><stop offset="0" stop-color="#bdb56d"/><stop offset=".06" stop-color="#eee79f"/><stop offset=".25" stop-color="#fffccb"/><stop offset=".55" stop-color="#ffffac"/><stop offset=".85" stop-color="#eae295"/><stop offset=".93" stop-color="#d8c890"/><stop offset="1" stop-color="#a79f5e"/></linearGradient>
                <linearGradient id="cap" x1="0" y1="0" x2="1" y2="0"><stop offset="0" stop-color="#a9a978"/><stop offset=".5" stop-color="#98967a"/><stop offset="1" stop-color="#a6988a"/></linearGradient>
                <linearGradient id="shade" x1="0" y1="0" x2="0" y2="1"><stop offset="0" stop-color="#a3a078" stop-opacity="0"/><stop offset=".5" stop-color="#a3a078" stop-opacity=".6"/><stop offset="1" stop-color="#96937a" stop-opacity=".9"/></linearGradient>
                <linearGradient id="disc"><stop offset="0" stop-color="#f3ed99"/><stop offset=".5" stop-color="#fffee0"/><stop offset="1" stop-color="#f3eeac"/></linearGradient>
                <clipPath id="rodclip"><path d="M368 240H401V551A16.500 16.500 0 0 1 368 551Z"/></clipPath>
              </defs>
              <g clip-path="url(#rodclip)">
                <path d="M368 240H401V570H368Z" fill="url(#rod)"/>
                <path d="M370 252L398 252V300L392 320Q376 296 370 262Z" fill="#d6d4c2" opacity=".9"/>
                <path d="M371 262Q380 285 390 303L396 345Q380 325 371 295Z" fill="#dedccc"/>
                <path d="M371 276Q374 290 386 312Q391 325 396 362Q376 320 371 292Z" fill="#a19e7e" opacity=".85"/>
                <path d="M377 262Q386 270 394 302L399 330Q391 300 377 262Z" fill="#8f8d70"/>
                <path d="M386 256L400 282V290Q390 276 384 258Z" fill="#989578"/>
                <path d="M374 325Q384 350 396 388Q399 400 398 385Q390 350 382 334Z" fill="#e3dfb0" opacity=".7"/>
                <path d="M384 400L398 470V560H374V480Z" fill="url(#shade)"/>
                <path d="M370 470L377 490L394 545L400 552H369Z" fill="#a9a77e" opacity=".7"/>
                <path d="M381 406Q396 430 398 480Q391 440 381 415Z" fill="#fffde0" opacity=".85"/>
                <path d="M377 451L385 468L400 522V532L392 505Q382 480 377 455Z" fill="#efeed0"/>
                <path d="M371 478L379 496Q386 505 398 540L400 552Q388 520 378 512Q371 500 371 478Z" fill="#e0dfbe"/>
                <path d="M370 508L385 522L395 540L377 526L383 542L376 536L370 520Z" fill="#ece9b4"/>
                <ellipse cx="384.500" cy="551" rx="16.500" ry="17" fill="url(#cap)"/>
                <path d="M374 300Q374 400 377 490" stroke="#fff" stroke-width="3" fill="none" opacity=".4"/>
              </g>
              <circle cx="384.500" cy="240" r="16" fill="url(#disc)" stroke="#000" stroke-width="2"/>
              <path d="M381 240.500H389M384.500 236V245M371 247L447 208" stroke="#000" fill="none"/>
              <path d="M400 232L407 226L409 229Z"/>
              <path d="M322 256.500H384M322 535.500H384M326.500 257V535" stroke="#000"/>
              <path d="M326.500 257L329 266H324ZM326.500 535L329 526H324Z"/>
              <ellipse cx="384.500" cy="256.500" rx="3.500" ry="2.500"/>
              <path d="M384.500 259V364" stroke="#111" stroke-dasharray="20 4 4 4"/>
              <path d="M401 395.500H405M409 395.500H413M417 395.500H525" stroke="#444" stroke-dasharray="20 4 4 4"/>
              <circle cx="525" cy="395.500" r="2.800" fill="#00f"/>
              <path d="M384.500 395V370M385 395.500H395" stroke="#f00"/>
              <path d="M384.500 363L388 372H381ZM402 395.500L392 399V392Z" fill="#f00"/>
              <path d="M381 392l7 7M388 392l-7 7M384.500 391v8" stroke="#800000"/>
              <g class="dimtext"><g transform="translate(409 224) rotate(-27)"><text x="9" y="0">3.53</text><circle cx="3" cy="-4" r="4" fill="none" stroke="#000"/><path d="M0 1L6 -10" stroke="#000"/></g><g transform="translate(322 423) rotate(-90)"><text x="9" y="0">30</text><circle cx="4" cy="-4.500" r="4" fill="none" stroke="#000"/><path d="M1 1L7 -10" stroke="#000"/></g></g>
              <g opacity=".32"><path d="M548 170H533V188Q536 193 548 193" fill="none" stroke="#4870f0" stroke-width="2"/><path d="M536 185L538 180L550 173L554 178L541 184Z" fill="#f8c860" stroke="#654"/><path d="M550 173L555 172L556 176L553 179Z" fill="#e88"/><path d="M556 183Q562 183 564 190Q565 198 557 200V205L547 197L556 189V194Q562 190 556 186Z" fill="#a858d0" stroke="#7a38a8"/></g>
              <path d="M573 207L577 203L584 210L591 203L595 207L588 214L595 221L591 224L584 218L577 224L573 221L580 214Z" fill="#f8c4c0" stroke="#dca8a4"/>
              <path d="M230.500 578h3v24h-3z" fill="#68b068" stroke="#0c6414"/><path d="M232 575L236 584H228Z" fill="#0c7418" stroke="#064c0c"/>
              <path d="M210 603.500h20v3h-20z" fill="#6868e8" stroke="#1010a0"/><path d="M202 605L211 601V609Z" fill="#1818c8" stroke="#000080"/>
              <circle cx="232" cy="605" r="4.500" fill="#841818"/><path d="M229 602l5 6M234 602l-5 6" stroke="#f00" stroke-width="1.500"/>
              <text class="axis" x="227" y="572" fill="#008000">Y</text><text class="axis" x="194" y="609" fill="#00f">Z</text>
              <text class="viewname" x="203" y="658">*右视</text>
            </svg>
            <div class="hud">
              <button type="button" aria-label="整屏显示"><svg class="ic"><use href="#zoomfit"/></svg></button>
              <button type="button" aria-label="局部放大"><svg class="ic"><use href="#zoomarea"/></svg></button>
              <button type="button" aria-label="上一视图"><svg class="ic"><use href="#prev"/></svg></button>
              <button type="button" aria-label="剖面视图"><svg class="ic"><use href="#section"/></svg></button>
              <button type="button" class="dd" aria-label="视图定向"><svg class="ic"><use href="#orient"/></svg><i class="tri"></i></button>
              <button type="button" class="dd" aria-label="显示样式"><svg class="ic"><use href="#display"/></svg><i class="tri"></i></button>
              <button type="button" class="dd" aria-label="隐藏项目"><svg class="ic"><use href="#specs"/></svg><i class="tri"></i></button>
              <button type="button" aria-label="编辑外观"><svg class="ic"><use href="#greyball"/></svg></button>
              <button type="button" class="dd" aria-label="应用布景"><svg class="ic"><use href="#scene"/></svg><i class="tri"></i></button>
              <button type="button" class="dd" aria-label="视图设定"><svg class="ic"><use href="#viewset"/></svg><i class="tri"></i></button>
            </div>
            <nav class="taskpane">
              <button type="button" aria-label="论坛"><svg class="ic"><use href="#forum"/></svg></button>
              <button type="button" aria-label="资源"><svg class="ic"><use href="#home"/></svg></button>
              <button type="button" aria-label="设计库"><svg class="ic"><use href="#lib"/></svg></button>
              <button type="button" aria-label="文件探索器"><svg class="ic"><use href="#open"/></svg></button>
              <button type="button" aria-label="视图调色板"><svg class="ic"><use href="#palette"/></svg></button>
              <button type="button" class="on" aria-label="外观布景"><svg class="ic"><use href="#ball"/></svg></button>
              <button type="button" aria-label="自定义属性"><svg class="ic"><use href="#sheet"/></svg></button>
            </nav>
          </section>
        </div>

        <div class="sheets">
          <div class="nav"><button type="button" aria-label="首页"><i class="bar"></i><i class="tri left"></i></button><button type="button" aria-label="上一页"><i class="tri left"></i></button><button type="button" aria-label="下一页"><i class="tri right"></i></button><button type="button" aria-label="末页"><i class="tri right"></i><i class="bar"></i></button></div>
          <a href="#" class="on">模型</a><a href="#" class="study">运动算例 1</a><span class="fill"></span>
        </div>
      </div>

      <aside class="tools sketching" aria-label="草图工具栏">
        <div class="grip"></div>
        <button type="button" class="active" aria-label="草图"><svg class="ic"><use href="#sketch"/></svg><i class="tri"></i></button>
        <button type="button" aria-label="智能尺寸"><svg class="ic"><use href="#dim"/></svg><i class="tri"></i></button>
        <hr>
        <button type="button" aria-label="直线"><svg class="ic"><use href="#line"/></svg><i class="tri"></i></button>
        <button type="button" aria-label="矩形"><svg class="ic"><use href="#rect"/></svg><i class="tri"></i></button>
        <button type="button" aria-label="槽口"><svg class="ic"><use href="#slot"/></svg><i class="tri"></i></button>
        <button type="button" aria-label="圆"><svg class="ic"><use href="#circle"/></svg><i class="tri"></i></button>
        <button type="button" aria-label="圆弧"><svg class="ic"><use href="#arc"/></svg><i class="tri"></i></button>
        <button type="button" aria-label="样条曲线"><svg class="ic"><use href="#spline"/></svg><i class="tri"></i></button>
        <button type="button" aria-label="椭圆"><svg class="ic"><use href="#ellipse"/></svg><i class="tri"></i></button>
        <button type="button" aria-label="圆角"><svg class="ic"><use href="#fillet"/></svg><i class="tri"></i></button>
        <button type="button" aria-label="多边形"><svg class="ic"><use href="#hex"/></svg></button>
        <button type="button" aria-label="点"><svg class="ic"><use href="#star"/></svg></button>
        <button type="button" aria-label="基准面"><svg class="ic"><use href="#plane"/></svg></button>
        <button type="button" aria-label="文字"><svg class="ic"><use href="#lettera"/></svg></button>
        <hr>
        <button type="button" aria-label="剪裁"><svg class="ic"><use href="#trim"/></svg><i class="tri"></i></button>
        <button type="button" aria-label="转换"><svg class="ic"><use href="#convert"/></svg><i class="tri"></i></button>
        <button type="button" aria-label="等距"><svg class="ic"><use href="#offset"/></svg></button>
        <button type="button" aria-label="镜向"><svg class="ic"><use href="#mirror"/></svg></button>
        <button type="button" aria-label="阵列"><svg class="ic"><use href="#pattern"/></svg><i class="tri"></i></button>
        <button type="button" aria-label="移动"><svg class="ic"><use href="#move"/></svg><i class="tri"></i></button>
        <button type="button" aria-label="显示几何关系"><svg class="ic"><use href="#glasses"/></svg><i class="tri"></i></button>
        <button type="button" aria-label="修复"><svg class="ic"><use href="#repair"/></svg></button>
        <button type="button" class="moredown" aria-label="更多"><svg><use href="#dblright"/></svg></button>
      </aside>
    </main>

    <footer class="status">
      <span class="product">SolidWorks Premium 2014 x...</span>
      <span class="x">2.08mm</span><span class="y">-28.2mm</span><span class="z">0mm</span><span class="state">完全定义</span>
      <span class="custom">自定义</span><i class="tri up"></i>
      <button type="button" class="help">?</button>
      <svg class="tag" viewBox="0 0 16 16" aria-hidden="true"><path d="M1 10L7 2L13 1L15 4L14 9L7 15L2 14Z" fill="#ffc820" stroke="#8c5000"/><path d="M5 9l4-4M7 11l4-4M3 10l4 3" stroke="#fff4b0"/><circle cx="12" cy="4" r="1.300" fill="#fff" stroke="#8c5000" stroke-width=".6"/></svg>
      <svg class="sizer" viewBox="0 0 9 9" aria-hidden="true"><path d="M6 0h2v2H6zM3 3h2v2H3zM6 3h2v2H6zM0 6h2v2H0zM3 6h2v2H3zM6 6h2v2H6z" fill="#b4b7bb"/></svg>
    </footer>
  </div>
</div>
</body>
</html>
```
FILE: styles.css
```css
*, *::before, *::after { box-sizing: border-box; }
body {
  margin: 0;
  background: #fff;
  color: #111;
  font: 12px/18px "Noto Sans", "Noto Sans CJK SC", sans-serif;
}
button { margin: 0; padding: 0; border: 0; background: none; color: inherit; font: inherit; }
a { color: inherit; text-decoration: none; }
svg { display: block; flex: none; overflow: visible; }
symbol { overflow: visible; }
ul { margin: 0; padding: 0; list-style: none; }
.sprite { position: absolute; width: 0; height: 0; }
.ic { width: 16px; height: 16px; }
.tri {
  flex: none;
  width: 0;
  height: 0;
  border: 3px solid transparent;
  border-top-color: #3a3d42;
  border-bottom-width: 0;
}
.tri.left { border: 3px solid transparent; border-right: 4px solid #333; border-left: 0; }
.tri.right { border: 3px solid transparent; border-left: 4px solid #333; border-right: 0; }
.tri.up { border: 3px solid transparent; border-bottom-color: #333; border-top: 0; }

.window {
  position: relative;
  display: flex;
  min-height: 100vh;
  padding: 6px;
  border: 1px solid #2c2c30;
  border-radius: 7px;
  background: linear-gradient(#c5c0c0, #f1eded 5px, #dedada 10px, #e6e2e1 150px, #f4f2f2 190px, #e5e3e3);
}
.cursor { position: absolute; left: 26px; top: 0; width: 12px; height: 24px; z-index: 5; }
.app {
  flex: 1;
  display: flex;
  flex-direction: column;
  min-width: 0;
  border: 1px solid #6c6f73;
  background: #d6dade;
}

.titlebar { display: flex; align-items: stretch; height: 29px; border-bottom: 1px solid #111; white-space: nowrap; }
.brand {
  flex: none;
  display: flex;
  align-items: center;
  gap: 5px;
  width: 131px;
  padding-left: 5px;
  border-left: 5px solid #dc2818;
  background: linear-gradient(#39434c, #20262d);
  color: #fff;
}
.ds { width: 20px; height: 20px; }
.brand-name { font: italic 14px/20px Lato, sans-serif; }
.brand-name b { font-weight: 900; }
.collapse { flex: none; display: flex; align-items: center; justify-content: center; width: 9px; background: #8d8f92; }
.menu { display: flex; align-items: center; gap: 14px; padding-left: 9px; background: linear-gradient(#b3b5b8, #a9abae); }
.menu .pin { width: 16px; margin-right: 3px; }
.menu .pin svg { width: 16px; height: 10px; }
.doc { align-self: center; padding-left: 1px; }
.winbtns { display: flex; align-items: center; gap: 9px; margin-left: auto; padding-right: 4px; }
.winbtns svg, .docbtns svg { width: 14px; height: 14px; }

.ribbon { display: flex; height: 77px; padding: 2px 2px 5px 6px; border-bottom: 1px solid #111; }
.big {
  flex: none;
  display: flex;
  flex-direction: column;
  align-items: center;
  width: 46px;
  padding-top: 4px;
  line-height: 13px;
}
.big span { width: 38px; text-align: center; }
.big .tri { margin-top: auto; margin-bottom: 6px; }
.big.wide { width: 54px; }
.big.wide span { width: 44px; }
.big.plain { padding-top: 12px; }
.big:disabled { color: #8b8e92; }
.big:disabled .tri { border-top-color: #8b8e92; }
.big.pressed { border: 1px solid #85888c; background: linear-gradient(#a6a9ac, #bdc0c3 54px, #dfe2e6 55px); padding-top: 3px; }
.big.pressed .tri { margin-bottom: 5px; }
.vsep { flex: none; width: 1px; margin: 2px 2px 2px 0; background: #6c6f73; }
.grid { flex: none; display: grid; grid-template-columns: 36px 36px 36px 20px; grid-auto-rows: 23px; padding-left: 3px; margin-right: 1px; }
.grid button, .list button { display: flex; align-items: center; gap: 6px; }
.list { display: grid; grid-auto-rows: 23px; width: 132px; padding-left: 2px; }
.list span { white-space: nowrap; }
.list .tri { margin-left: auto; margin-right: 5px; }
.more { display: flex; align-items: center; margin-left: auto; padding-right: 2px; }
.more svg { width: 9px; height: 9px; }

.main { flex: 1; display: flex; min-height: 0; }
.work { flex: 1; display: flex; flex-direction: column; min-width: 0; background: #fff; }
.tabrow { display: flex; justify-content: space-between; height: 19px; }
.tabs { display: flex; }
.tabs a {
  width: 57px;
  border: solid #222;
  border-width: 0 2px 2px 0;
  background: #a9abae;
  line-height: 17px;
  text-align: center;
}
.tabs a.on { width: 55px; background: #d8dce1; border-color: #555; }
.tabs a.mid { width: 66px; }
.tabs a.long { width: 75px; }
.docbtns { display: flex; align-items: flex-end; gap: 9px; padding-right: 12px; }
.docbtns button { height: 12px; }

.body { flex: 1; display: flex; min-height: 0; }
.tools { flex: none; width: 46px; padding: 5px 4px 0; background: #d6dade; }
.tools button { display: flex; align-items: center; gap: 10px; width: 100%; height: 23px; padding-left: 2px; }
.tools hr { height: 1px; margin: 3px 0; border: 0; background: #77797c; }
.grip { height: 2px; margin: 0 0 8px; background: repeating-linear-gradient(90deg, #555 0 2px, transparent 2px 4px); }
.features { width: 45px; padding-top: 8px; border-top: 2px solid #9298ac; }
.features .grip { margin-bottom: 6px; }
.features button { gap: 8px; }
.features .tri { border-width: 4px 4px 0; border-top-color: #777; }
.features .tri.dark { border-width: 3px 3px 0; border-top-color: #222; }
.features .instant { width: 23px; border: 1px solid #555; background: #b6b9bd; }
.endline { height: 2px; margin: 6px -4px 0; border-top: 1px solid #888; background: #fff; }
.sketching { padding-left: 3px; border-left: 1px solid #c3c6ca; }
.sketching .active { border: 1px solid #555; background: linear-gradient(90deg, #a6a9ad 25px, #888 25px 26px, #dfe2e6 26px); padding-left: 1px; }
.sketching .moredown { justify-content: center; height: 28px; padding: 0; }
.moredown svg { width: 9px; height: 9px; transform: rotate(90deg); }

.tree {
  position: relative;
  flex: none;
  display: flex;
  flex-direction: column;
  width: 139px;
  padding-top: 6px;
  border-top: 2px solid #9298ac;
  border-right: 2px solid #222;
  background: #e2e6eb;
}
.treetabs { display: flex; padding-left: 1px; background: #e2e6eb; }
.treetabs button {
  flex: 1;
  display: flex;
  align-items: center;
  justify-content: center;
  height: 22px;
  border: solid #222;
  border-width: 2px 0 1px 2px;
  background: #a9abae;
}
.treetabs .on { background: #e2e6eb; border-bottom-color: #e2e6eb; border-left-width: 1px; }
.filter { display: flex; align-items: center; gap: 4px; height: 19px; margin-left: 1px; padding-left: 7px; border: 1px solid #555; background: #f0f2f4; }
.filter svg { width: 12px; height: 12px; }
.filter input { flex: 1; min-width: 0; height: 15px; padding: 0; border: 0; background: none; outline: 0; }
.root { display: flex; align-items: center; gap: 5px; height: 18px; margin-top: 5px; padding-left: 2px; overflow: hidden; white-space: nowrap; }
.nodes { position: relative; }
.nodes::before { content: ""; position: absolute; left: 10px; top: 0; bottom: 9px; border-left: 1px dotted #777; }
.nodes li { position: relative; display: flex; align-items: center; gap: 5px; height: 18px; padding-left: 21px; white-space: nowrap; }
.nodes li::before { content: ""; position: absolute; left: 10px; top: 9px; width: 10px; border-top: 1px dotted #777; }
.nodes li.off { color: #777; }
.nodes li.marked-start::after { content: ""; position: absolute; left: 14px; top: -5px; width: 99px; height: 80px; border: 3px solid #f00000; z-index: 1; }
.plus { position: absolute; left: 6px; top: 5px; width: 9px; height: 9px; border: 1px solid #888; z-index: 1; background: linear-gradient(#113c9c, #113c9c) 1px 3px / 5px 1px no-repeat, linear-gradient(#113c9c, #113c9c) 3px 1px / 1px 5px no-repeat, #fff; }
.rollback { height: 2px; background: #9c9fbd; }
.hscroll { display: flex; align-items: center; height: 16px; margin-top: auto; margin-bottom: 2px; background: #ececee; }
.hscroll button { display: flex; width: 17px; padding-left: 5px; }
.hscroll .end { margin-left: auto; }
.thumb { width: 65px; height: 14px; border: 1px solid #85888c; border-radius: 1px; background: repeating-linear-gradient(90deg, #555 0 1px, transparent 1px 3px) 27px 4px / 8px 5px no-repeat, linear-gradient(#f7f7f7, #ccc); }
.splitter {
  position: absolute;
  left: 137px;
  top: 234px;
  width: 9px;
  height: 40px;
  display: flex;
  flex-direction: column;
  align-items: center;
  justify-content: space-around;
  border: solid #222;
  border-width: 1px 2px 2px 0;
  background: #e2e6eb;
  z-index: 2;
}

.viewport { position: relative; flex: 1; min-width: 0; background: #fff; }
.model { position: absolute; left: 0; top: 0; width: 100%; height: 100%; }
.dimtext { font: bold 14px "Liberation Mono", monospace; }
.axis { font: 12px "Liberation Mono", monospace; }
.viewname { font: bold 12px "Liberation Serif", "Noto Sans CJK SC", serif; }
.hud { position: relative; display: flex; align-items: center; gap: 7px; padding: 12px 0 0 74px; }
.hud .dd { display: flex; align-items: center; gap: 8px; }
.hud .tri { border-top-color: #666; }
.taskpane { position: absolute; right: 0; top: 40px; width: 24px; border: solid #222; border-width: 1px 0 1px 1px; }
.taskpane button { display: flex; align-items: center; justify-content: center; width: 100%; height: 24px; border-bottom: 2px solid #222; background: #a9abae; }
.taskpane .on { background: #e2e6eb; }

.sheets { display: flex; height: 16px; padding-left: 45px; border-bottom: 1px solid #888; background: #d6dade; line-height: 14px; }
.sheets .nav { display: flex; width: 69px; padding: 1px 4px 0 2px; gap: 1px; background: #c0c6ca; }
.sheets .nav button { flex: 1; display: flex; align-items: center; justify-content: center; background: #a9abae; }
.sheets .nav .left { border-right-color: #85888c; }
.sheets .nav .right { border-left-color: #85888c; }
.bar { width: 1px; height: 8px; background: #85888c; }
.sheets a { width: 45px; border: solid #222; border-width: 0 1px 1px; text-align: center; }
.sheets a.on { background: #e2e6eb; }
.sheets a.study { width: 77px; border-width: 1px 2px 2px 0; background: #a9abae; line-height: 12px; }
.fill { flex: 1; border-top: 1px solid #000; background: #e2e6eb; }

.status { display: flex; align-items: center; height: 18px; border-top: 1px solid #f5f6f7; padding-left: 2px; white-space: nowrap; }
.product { width: 200px; }
.x { width: 78px; }
.y { width: 71px; }
.z { width: 32px; }
.state { width: 115px; }
.custom { width: 51px; }
.help { width: 14px; height: 14px; margin-left: 17px; border: 1px solid #222; background: #d8f4d8; color: #087818; font-weight: bold; line-height: 12px; }
.tag { width: 16px; height: 16px; margin-left: auto; }
.sizer { width: 9px; height: 9px; margin: 0 2px 0 14px; align-self: flex-end; }
```
